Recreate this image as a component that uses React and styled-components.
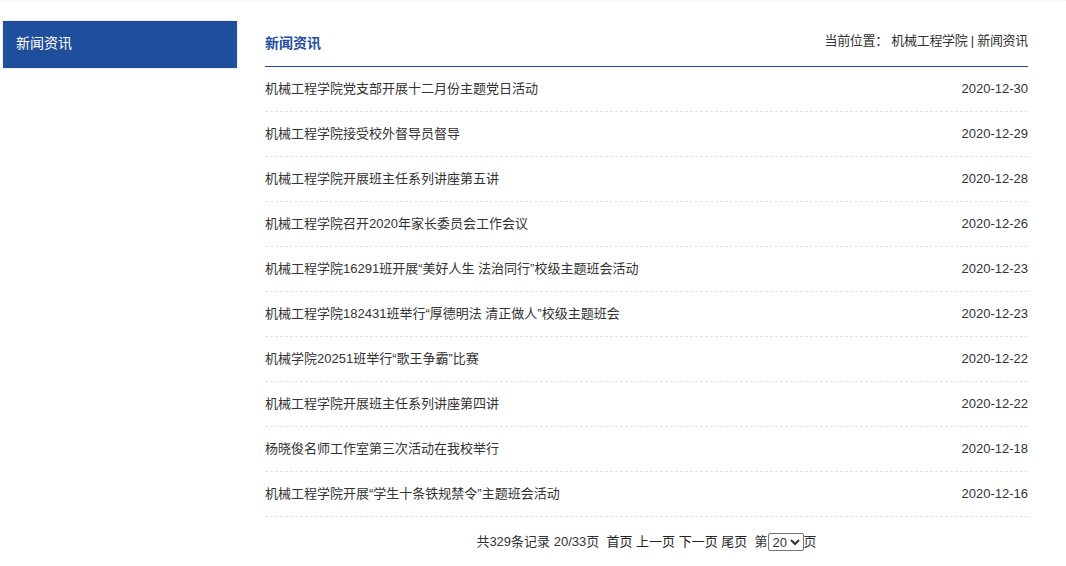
import React from "react";
import styled, { createGlobalStyle } from "styled-components";

const GlobalStyle = createGlobalStyle`
  body {
    margin: 0;
    background: #fff;
    font-family: "Liberation Sans", "Noto Sans CJK SC", sans-serif;
    color: #333;
  }
`;

const news = [
  ["机械工程学院党支部开展十二月份主题党日活动", "2020-12-30"],
  ["机械工程学院接受校外督导员督导", "2020-12-29"],
  ["机械工程学院开展班主任系列讲座第五讲", "2020-12-28"],
  ["机械工程学院召开2020年家长委员会工作会议", "2020-12-26"],
  ["机械工程学院16291班开展“美好人生 法治同行”校级主题班会活动", "2020-12-23"],
  ["机械工程学院182431班举行“厚德明法 清正做人”校级主题班会", "2020-12-23"],
  ["机械学院20251班举行“歌王争霸”比赛", "2020-12-22"],
  ["机械工程学院开展班主任系列讲座第四讲", "2020-12-22"],
  ["杨晓俊名师工作室第三次活动在我校举行", "2020-12-18"],
  ["机械工程学院开展“学生十条铁规禁令”主题班会活动", "2020-12-16"],
];

const App = () => {
  return (
    <>
      <GlobalStyle />
      <TopShade />
      <Page>
        <Sidebar>
          <SideItem>新闻资讯</SideItem>
        </Sidebar>
        <Main>
          <Header>
            <Title>新闻资讯</Title>
            <Crumb>
              当前位置： <a>机械工程学院</a> | <a>新闻资讯</a>
            </Crumb>
          </Header>
          <List>
            {news.map(([t, d], i) => (
              <Row key={i}>
                <ItemTitle>{t}</ItemTitle>
                <Date>{d}</Date>
              </Row>
            ))}
          </List>
          <Pager>
            共329条记录 20/33页&nbsp; <a>首页</a> <a>上一页</a>{" "}
            <a>下一页</a> <a>尾页</a>&nbsp; 第
            <PageSelect defaultValue="20">
              <option value="20">20</option>
            </PageSelect>
            页
          </Pager>
        </Main>
      </Page>
    </>
  );
};

export default App;

const TopShade = styled.div`
  height: 1px;
  background: #f4f4f4;
  box-shadow: 0 1px 4px rgba(0, 0, 0, 0.06);
`;

const Page = styled.div`
  display: flex;
  align-items: flex-start;
  padding-top: 19px;
  padding-left: 2px;
`;

const Sidebar = styled.div`
  width: 234px;
  border: 1px solid #eeeeee;
`;

const SideItem = styled.div`
  height: 47px;
  box-sizing: border-box;
  line-height: 45px;
  padding-bottom: 2px;
  background: #1f4e9c;
  color: #fff;
  font-size: 14px;
  padding-left: 13px;
`;

const Main = styled.div`
  width: 763px;
  margin-left: 27px;
`;

const Header = styled.div`
  height: 47px;
  display: flex;
  justify-content: space-between;
  align-items: flex-end;
  padding-bottom: 14px;
  box-sizing: border-box;
  border-bottom: 1px solid #1f4e9c;
`;

const Title = styled.div`
  font-size: 14px;
  font-weight: bold;
  color: #1f4e9c;
  line-height: 18px;
`;

const Crumb = styled.div`
  font-size: 13px;
  letter-spacing: -0.3px;
  color: #333;
  line-height: 18px;
  padding-bottom: 2px;
  a {
    color: #333;
  }
`;

const List = styled.div`
  display: flex;
  flex-direction: column;
`;

const Row = styled.div`
  height: 44px;
  box-sizing: content-box;
  display: flex;
  align-items: center;
  justify-content: space-between;
  border-bottom: 1px dashed #e3e3e3;
  font-size: 13px;
  color: #333;
`;

const ItemTitle = styled.span`
  padding-bottom: 4px;
`;

const Date = styled.span`
  font-size: 13px;
  color: #333;
  padding-bottom: 2px;
`;

const Pager = styled.div`
  text-align: center;
  font-size: 13px;
  color: #333;
  padding-top: 16px;
  line-height: 18px;
  a {
    color: #222;
  }
`;

const PageSelect = styled.select`
  font-family: "Liberation Sans", sans-serif;
  font-size: 13px;
  height: 18px;
  width: 36px;
  padding: 0;
  border: 1px solid #767676;
  border-radius: 2px;
  color: #333;
  background: #fff;
  vertical-align: middle;
  margin-top: -2px;
`;
